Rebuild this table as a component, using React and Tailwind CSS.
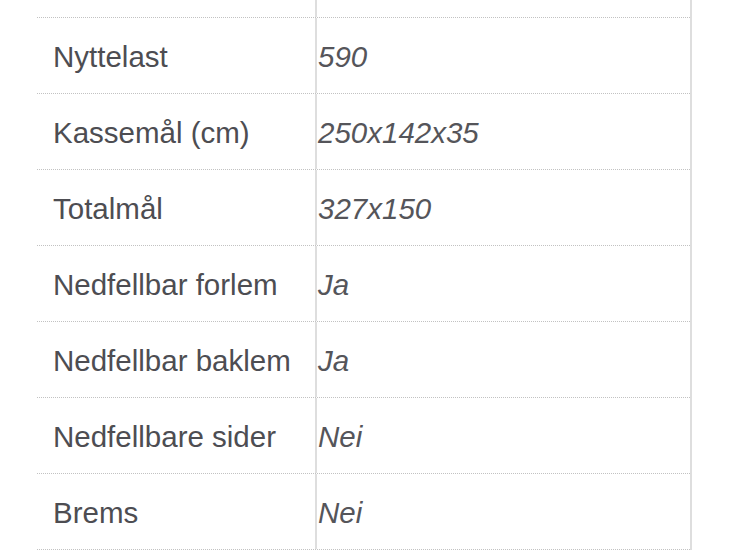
import React from "react";

const rows = [
  { label: "Nyttelast", value: "590" },
  { label: "Kassemål (cm)", value: "250x142x35" },
  { label: "Totalmål", value: "327x150" },
  { label: "Nedfellbar forlem", value: "Ja" },
  { label: "Nedfellbar baklem", value: "Ja" },
  { label: "Nedfellbare sider", value: "Nei" },
  { label: "Brems", value: "Nei" },
];

const App = () => {
  return (
    <div className="w-[732px] h-[550px] overflow-hidden bg-white font-['Liberation_Sans',Arial,sans-serif] text-[29.5px] text-[#4d4d52]">
      <div className="ml-[37px] w-[655px] border-r-2 border-[#dedede]">
        {/* tail of the row above */}
        <div className="flex h-[18px] border-b border-dotted border-[#c2c2c2]">
          <div className="w-[278px]" />
          <div className="flex-1 border-l-2 border-[#dedede]" />
        </div>

        {rows.map((row) => (
          <div key={row.label} className="flex h-[76px] border-b border-dotted border-[#c2c2c2]">
            <div className="w-[278px] flex items-center pt-[3px] pl-[16px] whitespace-nowrap">{row.label}</div>
            <div className="flex-1 flex items-center pt-[3px] pl-[1px] border-l-2 border-[#dedede] italic text-[#55555a]">{row.value}</div>
          </div>
        ))}
      </div>
    </div>
  );
};

export default App;
